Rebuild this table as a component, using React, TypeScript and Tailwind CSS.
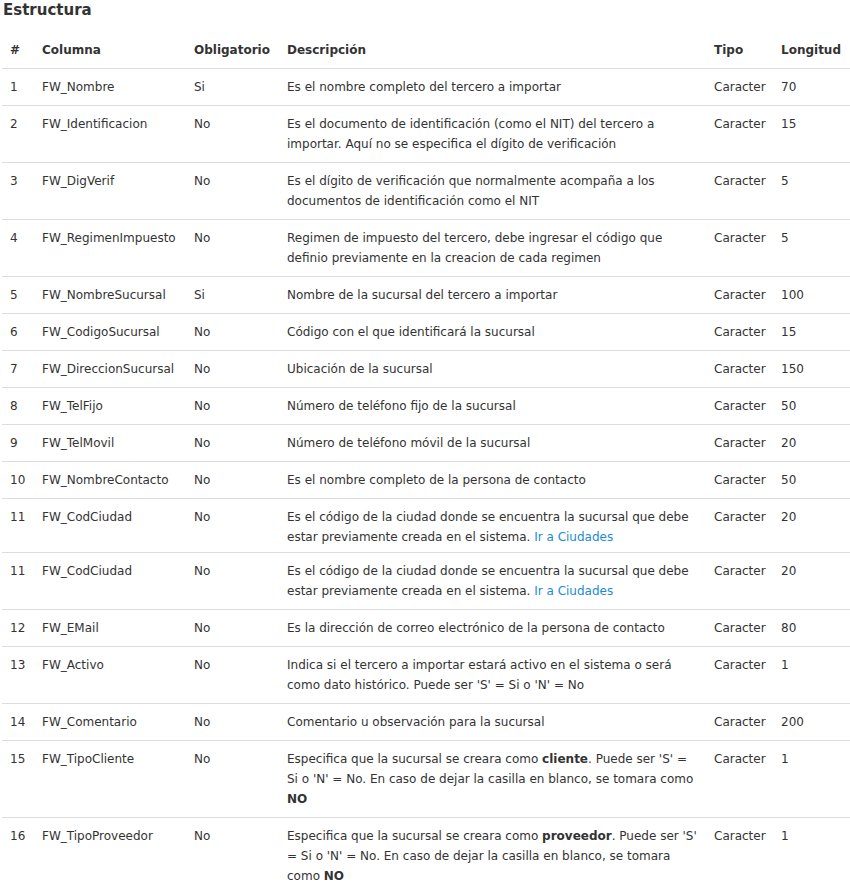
import type { ReactNode } from 'react'

interface Row {
  n: string
  col: string
  req: string
  desc: ReactNode
  len: string
  short?: boolean
}

const link = <a className="text-[#1b8bd3]">Ir a Ciudades</a>

const rows: Row[] = [
  { n: '1', col: 'FW_Nombre', req: 'Si', desc: 'Es el nombre completo del tercero a importar', len: '70' },
  { n: '2', col: 'FW_Identificacion', req: 'No', desc: <>Es el documento de identificación (como el NIT) del tercero a<br />importar. Aquí no se especifica el dígito de verificación</>, len: '15' },
  { n: '3', col: 'FW_DigVerif', req: 'No', desc: <>Es el dígito de verificación que normalmente acompaña a los<br />documentos de identificación como el NIT</>, len: '5' },
  { n: '4', col: 'FW_RegimenImpuesto', req: 'No', desc: <>Regimen de impuesto del tercero, debe ingresar el código que<br />definio previamente en la creacion de cada regimen</>, len: '5' },
  { n: '5', col: 'FW_NombreSucursal', req: 'Si', desc: 'Nombre de la sucursal del tercero a importar', len: '100' },
  { n: '6', col: 'FW_CodigoSucursal', req: 'No', desc: 'Código con el que identificará la sucursal', len: '15' },
  { n: '7', col: 'FW_DireccionSucursal', req: 'No', desc: 'Ubicación de la sucursal', len: '150' },
  { n: '8', col: 'FW_TelFijo', req: 'No', desc: 'Número de teléfono fijo de la sucursal', len: '50' },
  { n: '9', col: 'FW_TelMovil', req: 'No', desc: 'Número de teléfono móvil de la sucursal', len: '20' },
  { n: '10', col: 'FW_NombreContacto', req: 'No', desc: 'Es el nombre completo de la persona de contacto', len: '50' },
  { n: '11', col: 'FW_CodCiudad', req: 'No', desc: <>Es el código de la ciudad donde se encuentra la sucursal que debe<br />estar previamente creada en el sistema. {link}</>, len: '20', short: true },
  { n: '11', col: 'FW_CodCiudad', req: 'No', desc: <>Es el código de la ciudad donde se encuentra la sucursal que debe<br />estar previamente creada en el sistema. {link}</>, len: '20' },
  { n: '12', col: 'FW_EMail', req: 'No', desc: 'Es la dirección de correo electrónico de la persona de contacto', len: '80' },
  { n: '13', col: 'FW_Activo', req: 'No', desc: <>Indica si el tercero a importar estará activo en el sistema o será<br />como dato histórico. Puede ser 'S' = Si o 'N' = No</>, len: '1' },
  { n: '14', col: 'FW_Comentario', req: 'No', desc: 'Comentario u observación para la sucursal', len: '200' },
  { n: '15', col: 'FW_TipoCliente', req: 'No', desc: <>Especifica que la sucursal se creara como <b>cliente</b>. Puede ser 'S' =<br />Si o 'N' = No. En caso de dejar la casilla en blanco, se tomara como<br /><b>NO</b></>, len: '1' },
  { n: '16', col: 'FW_TipoProveedor', req: 'No', desc: <>Especifica que la sucursal se creara como <b>proveedor</b>. Puede ser 'S'<br />= Si o 'N' = No. En caso de dejar la casilla en blanco, se tomara<br />como <b>NO</b></>, len: '1' },
]

export default function App() {
  const td = 'px-2 pt-2 align-top whitespace-nowrap'
  return (
    <div className="bg-white pl-[2px] text-[#333] text-[12px] leading-5 font-['DejaVu_Sans',sans-serif]">
      <h2 className="pl-px text-[15px] leading-5 font-bold mb-[12px]">Estructura</h2>
      <table className="w-[848px] table-fixed border-collapse">
        <colgroup>
          <col className="w-[32px]" />
          <col className="w-[152px]" />
          <col className="w-[93px]" />
          <col className="w-[427px]" />
          <col className="w-[67px]" />
          <col className="w-[77px]" />
        </colgroup>
        <thead>
          <tr className="border-b border-[#ddd]">
            <th className="px-2 py-2 text-left font-bold">#</th>
            <th className="px-2 py-2 text-left font-bold">Columna</th>
            <th className="px-2 py-2 text-left font-bold">Obligatorio</th>
            <th className="px-2 py-2 text-left font-bold">Descripción</th>
            <th className="px-2 py-2 text-left font-bold">Tipo</th>
            <th className="px-2 py-2 text-left font-bold">Longitud</th>
          </tr>
        </thead>
        <tbody>
          {rows.map((r, i) => {
            const pb = r.short ? 'pb-[5px]' : 'pb-2'
            return (
              <tr key={i} className="border-b border-[#ddd] last:border-b-0">
                <td className={`${td} ${pb}`}>{r.n}</td>
                <td className={`${td} ${pb}`}>{r.col}</td>
                <td className={`${td} ${pb}`}>{r.req}</td>
                <td className={`${td} ${pb}`}>{r.desc}</td>
                <td className={`${td} ${pb}`}>Caracter</td>
                <td className={`${td} ${pb}`}>{r.len}</td>
              </tr>
            )
          })}
        </tbody>
      </table>
    </div>
  )
}
